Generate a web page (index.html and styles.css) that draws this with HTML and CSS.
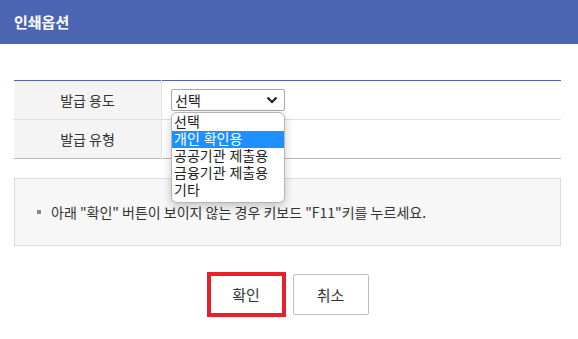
FILE: index.html
```html
<html>
<head>
    <meta charset="UTF-8">
    <title>인쇄옵션</title>
    <link rel="stylesheet" href="styles.css">
</head>
<body>
    <div class="header">인쇄옵션</div>
    <div class="content">
        <table class="options">
            <tr>
                <th>발급 용도</th>
                <td>
                    <div class="field">
                        <div class="select">
                            <span>선택</span>
                            <svg width="12" height="8" viewBox="0 0 12 8"><path d="M1.5 1.5 L6 6 L10.5 1.5" fill="none" stroke="#222" stroke-width="2.2"/></svg>
                        </div>
                        <ul class="dropdown">
                            <li>선택</li>
                            <li class="active">개인 확인용</li>
                            <li>공공기관 제출용</li>
                            <li>금융기관 제출용</li>
                            <li>기타</li>
                        </ul>
                    </div>
                </td>
            </tr>
            <tr>
                <th>발급 유형</th>
                <td></td>
            </tr>
        </table>

        <div class="notice">
            <span class="bullet"></span>
            <span>아래 "확인" 버튼이 보이지 않는 경우 키보드 "F11"키를 누르세요.</span>
        </div>

        <div class="buttons">
            <button class="btn confirm">확인</button>
            <button class="btn cancel">취소</button>
        </div>
    </div>
</body>
</html>
```

FILE: styles.css
```css
body {
    margin: 0;
    background: #fff;
    font-family: "Noto Sans CJK KR", "Noto Sans", sans-serif;
    color: #333;
}

.header {
    height: 44px;
    line-height: 44px;
    padding-left: 14px;
    background-color: #4c65b3;
    color: #fff;
    font-size: 15px;
    font-weight: bold;
}

.content {
    padding: 36px 17px 0 14px;
}

.options {
    width: 100%;
    border-collapse: collapse;
    border-top: 1px solid #4c65b3;
    border-bottom: 1px solid #b9b9b9;
}

.options tr + tr {
    border-top: 1px solid #e0e0e0;
}

.options th {
    width: 147px;
    height: 39px;
    padding: 0;
    background-color: #f4f4f4;
    border-right: 1px solid #e3e3e3;
    font-size: 14px;
    font-weight: normal;
    color: #333;
    text-align: center;
}

.options td {
    padding: 0 0 0 9px;
    vertical-align: middle;
}

.field {
    position: relative;
    width: 114px;
}

.select {
    display: flex;
    align-items: center;
    justify-content: space-between;
    height: 20px;
    padding: 0 6px 0 3px;
    border: 1px solid #a9a9a9;
    border-radius: 2px;
    font-size: 14px;
    line-height: 20px;
    color: #222;
}

.dropdown {
    position: absolute;
    left: 0;
    top: 23px;
    z-index: 2;
    width: 112px;
    margin: 0;
    padding: 1px 0 3px;
    list-style: none;
    background: #fff;
    border: 1px solid #b5b5b5;
    border-radius: 6px;
    box-shadow: 0 3px 10px rgba(0, 0, 0, 0.22);
    font-family: "Liberation Sans", "Noto Sans CJK KR", sans-serif;
}

.dropdown li {
    height: 17px;
    line-height: 17px;
    padding-left: 2px;
    font-size: 14px;
    color: #222;
}

.dropdown li.active {
    background-color: #1e90ff;
    color: #fff;
}

.notice {
    display: flex;
    align-items: center;
    height: 66px;
    margin-top: 19px;
    padding-left: 22px;
    background-color: #f7f7f7;
    border: 1px solid #dcdcdc;
    font-size: 14px;
    color: #333;
}

.bullet {
    width: 4px;
    height: 4px;
    margin-right: 10px;
    background-color: #888;
}

.buttons {
    display: flex;
    justify-content: center;
    align-items: center;
    gap: 7px;
    margin-top: 26px;
}

.btn {
    background: #fff;
    font-family: "Noto Sans CJK KR", "Noto Sans", sans-serif;
    font-size: 15px;
    color: #333;
    cursor: pointer;
}

.confirm {
    width: 79px;
    height: 45px;
    border: 4px solid #e8202a;
}

.cancel {
    width: 76px;
    height: 41px;
    border: 1px solid #bdbdbd;
    border-radius: 2px;
}
```
